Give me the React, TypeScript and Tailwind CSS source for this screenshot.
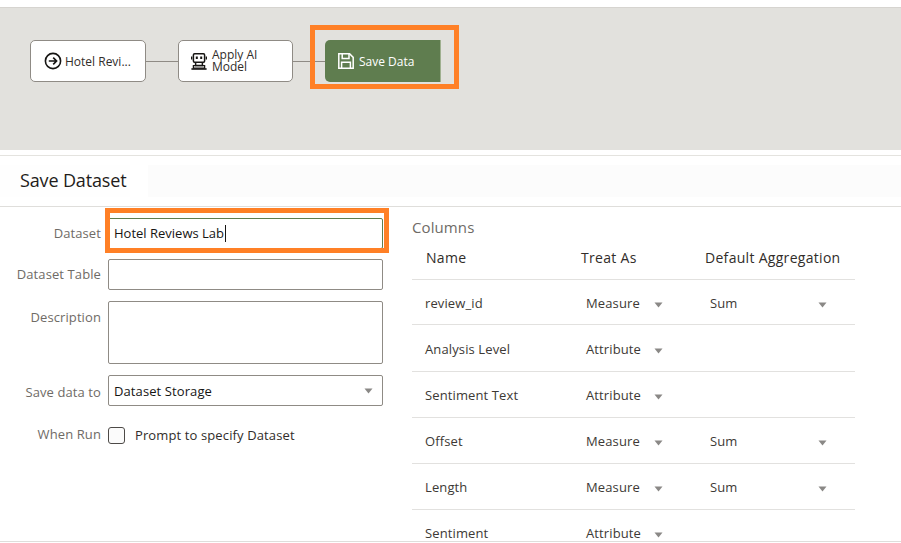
const font = "font-['Open_Sans',sans-serif]"

function Caret({ className = '' }: { className?: string }) {
  return (
    <svg width="9" height="6" viewBox="0 0 9 6" className={className}>
      <path d="M0.5 0.5h8L4.5 5.5z" fill="#8a8886" />
    </svg>
  )
}

function ArrowCircleIcon() {
  return (
    <svg width="18" height="18" viewBox="0 0 18 18" fill="none" stroke="#161513" strokeWidth="1.6">
      <circle cx="9" cy="9" r="7.6" />
      <path d="M4.8 9h7.6M9.2 5.6 12.6 9l-3.4 3.4" />
    </svg>
  )
}

function RobotIcon() {
  return (
    <svg width="16" height="17" viewBox="0 0 16 17" fill="none" stroke="#161513" strokeWidth="1.5">
      <rect x="2.4" y="0.8" width="11.2" height="8.4" rx="1.2" />
      <path d="M0.6 3.5v3M15.4 3.5v3" strokeWidth="1.4" />
      <path d="M5.8 3.4v2.6M10.2 3.4v2.6" strokeWidth="2" />
      <path d="M4.6 9.2v3.4h6.8V9.2" />
      <path d="M2.4 12.6h11.2v2.6H2.4z" strokeWidth="1.3" />
      <path d="M0.4 16h15.2" strokeWidth="1.6" />
    </svg>
  )
}

function SaveIcon() {
  return (
    <svg width="16" height="16" viewBox="0 0 16 16" fill="none" stroke="#ffffff" strokeWidth="1.5">
      <path d="M0.8 0.8h10.8l3.6 3.6v10.8H0.8z" />
      <path d="M4.2 0.8v4.6h6.8V0.8" />
      <path d="M3.6 15.2V9.2h8.8v6" />
    </svg>
  )
}

const rows = [
  { name: 'review_id', treat: 'Measure', agg: 'Sum', h: 'h-[45px] pt-[3px]' },
  { name: 'Analysis Level', treat: 'Attribute', h: 'h-[47px] pt-[3px]' },
  { name: 'Sentiment Text', treat: 'Attribute', h: 'h-[46px] pt-[2px]' },
  { name: 'Offset', treat: 'Measure', agg: 'Sum', h: 'h-[46px] pt-[2px]' },
  { name: 'Length', treat: 'Measure', agg: 'Sum', h: 'h-[46px] pt-[2px]' },
  { name: 'Sentiment', treat: 'Attribute', h: 'h-[46px] pt-[2px]' },
]

function FieldLabel({ children, className = '' }: { children: string; className?: string }) {
  return (
    <div className={`w-[101px] whitespace-nowrap text-right text-[13px] tracking-[0.1px] text-[#6f6b66] ${className}`}>
      {children}
    </div>
  )
}

export default function App() {
  return (
    <div className={`${font} relative h-[543px] w-[901px] overflow-hidden bg-white text-[#161513]`}>
      {/* Flow canvas */}
      <div className="h-[7px]" />
      <div className="relative h-[143px] border-t border-[#d6d4d0] bg-[#e2e1dd]">
        <div className="flex items-center pl-[30px] pt-[32px]">
          <div className="flex h-[42px] w-[116px] items-center rounded-[5px] border border-[#8f8b85] bg-white pl-[13px]">
            <ArrowCircleIcon />
            <span className="ml-[3px] pt-[1px] text-[12px] text-[#312d2a]">Hotel Revi...</span>
          </div>
          <div className="h-px w-[32px] bg-[#8f8b85]" />
          <div className="flex h-[42px] w-[115px] items-center rounded-[5px] border border-[#8f8b85] bg-white pl-[12px]">
            <RobotIcon />
            <span className="ml-[5px] text-[12px] leading-[12px] text-[#312d2a]">
              Apply AI
              <br />
              Model
            </span>
          </div>
          <div className="h-px w-[32px] bg-[#8f8b85]" />
          <div className="flex h-[42px] w-[116px] items-center rounded-l-[5px] border-r border-[#9fb08f] bg-[#5f7d4f] pl-[13px]">
            <SaveIcon />
            <span className="ml-[5px] pt-[1px] text-[12px] font-medium text-white">Save Data</span>
          </div>
        </div>
        <div className="absolute left-[310px] top-[17px] h-[64px] w-[149px] border-[5px] border-[#ff8026]" />
      </div>

      {/* Editor panel */}
      <div className="mt-[5px] border-t border-[#e4e3df]">
        <div className="flex h-[51px] items-center border-b border-[#dfdedb]">
          <div className="flex h-[32px] w-[130px] items-center bg-[#fefefe] pb-[2px] pl-[20px] text-[18px] tracking-[-0.15px] text-[#1f1c1a]">
            Save Dataset
          </div>
          <div className="ml-[18px] h-[32px] flex-1 bg-[#fcfcfc]" />
        </div>

        <div className="flex">
          {/* Form */}
          <div className="relative w-[412px] shrink-0 pt-[10px]">
            <div className="flex h-[32px] items-center">
              <FieldLabel className="pt-[1px]">Dataset</FieldLabel>
              <div className="relative ml-[7px] flex h-[31px] w-[275px] items-center rounded-[2px] border border-[#5f7d4f] pl-[5px] pt-[1px] text-[13px] text-[#161513]">
                Hotel Reviews Lab
                <span className="ml-px h-[17px] w-px bg-[#161513]" />
              </div>
            </div>
            <div className="mt-[10px] flex h-[31px] items-center">
              <FieldLabel className="pt-[1px]">Dataset Table</FieldLabel>
              <div className="ml-[7px] h-[31px] w-[275px] rounded-[2px] border border-[#8f8b85]" />
            </div>
            <div className="mt-[11px] flex h-[63px] items-start">
              <FieldLabel className="pt-[7px]">Description</FieldLabel>
              <div className="ml-[7px] h-[63px] w-[275px] rounded-[2px] border border-[#8f8b85]" />
            </div>
            <div className="mt-[11px] flex h-[31px] items-center">
              <FieldLabel className="pt-[4px]">Save data to</FieldLabel>
              <div className="ml-[7px] flex h-[31px] w-[275px] items-center justify-between rounded-[2px] border border-[#8f8b85] pl-[5px] pr-[9px] text-[13px] tracking-[0.1px]">
                <span className="pt-[2px]">Dataset Storage</span>
                <Caret />
              </div>
            </div>
            <div className="mt-[20px] flex h-[18px] items-center">
              <FieldLabel>When Run</FieldLabel>
              <div className="ml-[7px] h-[17px] w-[17px] rounded-[3px] border border-[#4d4a47] bg-[#fbfbfb]" />
              <span className="ml-[10px] pt-[1px] text-[13px] tracking-[0.12px] text-[#312d2a]">Prompt to specify Dataset</span>
            </div>
            <div className="absolute left-[105px] top-[1px] h-[45px] w-[284px] border-[5px] border-[#ff8026]" />
          </div>

          {/* Columns table */}
          <div className="w-[443px]">
            <div className="flex h-[32px] items-end pb-[1px] text-[15px] tracking-[0.1px] text-[#6f6b66]">Columns</div>
            <div className="grid h-[41px] grid-cols-[169px_124px_1fr] items-center border-b border-[#e2e1df] pb-[4px] text-[14px] tracking-[0.3px] text-[#312d2a]">
              <span className="pl-[14px]">Name</span>
              <span>Treat As</span>
              <span className="whitespace-nowrap">Default Aggregation</span>
            </div>
            {rows.map((r) => (
              <div
                key={r.name}
                className={`grid ${r.h} grid-cols-[174px_124px_1fr] items-center border-b border-[#e2e1df] text-[13px] tracking-[0.12px] text-[#3d3935]`}
              >
                <span className="pl-[13px]">{r.name}</span>
                <span className="flex items-center">
                  <span className="w-[68px]">{r.treat}</span>
                  <Caret className="mt-[2px]" />
                </span>
                {r.agg ? (
                  <span className="flex items-center">
                    <span className="w-[108px]">{r.agg}</span>
                    <Caret className="mt-[2px]" />
                  </span>
                ) : (
                  <span />
                )}
              </div>
            ))}
          </div>
        </div>
      </div>

      <div className="absolute bottom-0 left-0 h-[2px] w-full border-t border-[#dfdedb] bg-white" />
    </div>
  )
}
